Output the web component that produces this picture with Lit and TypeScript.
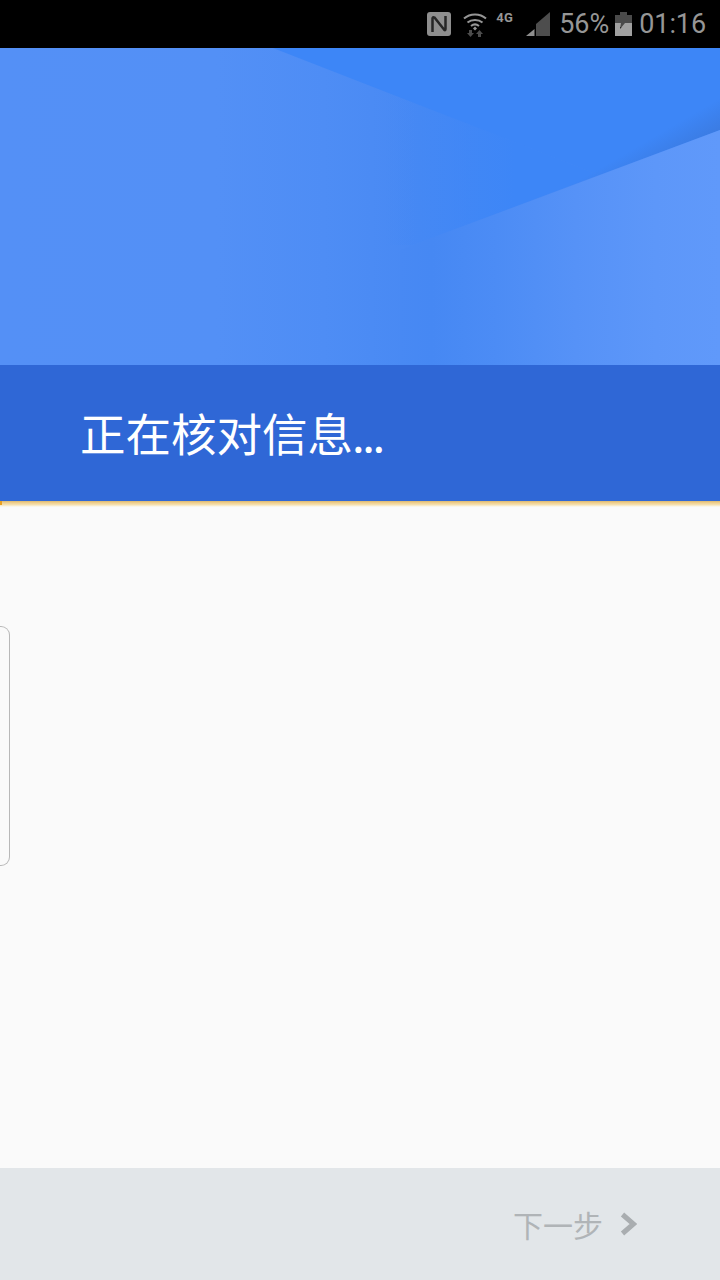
import { LitElement, html, css } from "lit";
import { customElement } from "lit/decorators.js";

@customElement("app-root")
export class AppRoot extends LitElement {
  static styles = css`
    :host {
      display: flex;
      flex-direction: column;
      width: 720px;
      height: 1280px;
      overflow: hidden;
      background: #fafafa;
      font-family: Roboto, "Noto Sans CJK SC", sans-serif;
    }
    .status {
      height: 48px;
      flex: none;
      background: #000;
      color: #969696;
      display: flex;
      align-items: center;
      justify-content: flex-end;
      padding-right: 14px;
      box-sizing: border-box;
    }
    .status svg { display: block; flex: none; }
    .nfc { margin-right: 12px; }
    .wifi { margin-right: 9px; }
    .net {
      font-size: 13px;
      font-weight: 700;
      width: 20px;
      margin-right: 10px;
      align-self: flex-start;
      margin-top: 11px;
      line-height: 14px;
      letter-spacing: 0.5px;
    }
    .signal { margin-right: 9px; }
    .pct { font-size: 27px; line-height: 48px; margin-right: 6px; }
    .batt { margin-right: 7px; }
    .time { font-size: 27px; line-height: 48px; letter-spacing: -0.1px; }
    .hero { height: 317px; flex: none; }
    .hero svg { display: block; }
    .band {
      height: 136px;
      flex: none;
      background: #2f67d6;
      display: flex;
      align-items: center;
      padding: 0 0 3px 80px;
      box-sizing: border-box;
      color: #fff;
      font-size: 45.5px;
      font-family: "Noto Sans CJK SC", sans-serif;
      line-height: 60px;
    }
    .dots { letter-spacing: -2.4px; margin-left: -1px; }
    .progress {
      height: 6px;
      flex: none;
      background:
        linear-gradient(#e8a020, #e8a020) no-repeat 0 0 / 2px 4px,
        linear-gradient(#dcb870 0%, #efcf8e 30%, #f5dfae 60%, #f9eed2 80%, #fafafa 100%);
    }
    .body { flex: 1; padding-top: 119px; box-sizing: border-box; }
    .handle {
      width: 10px;
      height: 240px;
      box-sizing: border-box;
      border: 1px solid #b8b8b8;
      border-left: none;
      border-radius: 0 9px 9px 0;
    }
    .footer {
      height: 112px;
      flex: none;
      background: #e2e6e9;
      display: flex;
      align-items: center;
      justify-content: flex-end;
      padding-right: 83px;
      box-sizing: border-box;
      color: #b0b4b7;
      font-size: 30px;
      line-height: 40px;
      font-family: "Noto Sans CJK SC", sans-serif;
    }
    .chev { display: block; margin-left: 17px; }
  `;

  render() {
    return html`
      <div class="status">
        <svg class="nfc" width="24" height="24" viewBox="0 0 24 24">
          <rect width="24" height="24" rx="3" fill="#8e8e8e" />
          <path d="M5.500 20V6.500Q5.500 4.500 7.500 5.500L17 17.500Q18.500 19 18.500 17V4" fill="none" stroke="#262626" stroke-width="2.500" />
        </svg>
        <svg class="wifi" width="24" height="26" viewBox="0 0 24 26">
          <g fill="none" stroke="#969696" stroke-width="2">
            <path d="M1 7.500C7 2 17 2 23 7.500" />
            <path d="M4.500 11.500C8.500 8 15.500 8 19.500 11.500" />
            <path d="M8 15c2.500-2 5.500-2 8 0" />
          </g>
          <path fill="#969696" d="M12 15.500l2 2-2 2-2-2z" />
          <path fill="#4c4c4c" d="M6 19h3v3h2l-3.500 4-3.500-4h2zM18 26h-3v-3h-2l3.500-4 3.500 4h-2z" />
        </svg>
        <span class="net">4G</span>
        <svg class="signal" width="24" height="24" viewBox="0 0 24 24">
          <path fill="#4d4d4d" d="M24 0v24H10V12z" />
          <path fill="#8e8e8e" d="M8.500 17v7H0z" />
        </svg>
        <span class="pct">56%</span>
        <svg class="batt" width="17" height="24" viewBox="0 0 17 24">
          <path fill="#4a4a4a" d="M5 0h7v3h5v12H0V3h5z" />
          <path fill="#a0a0a0" d="M0 11h6l-1 6 5-6h7v13H0z" />
        </svg>
        <span class="time">01:16</span>
      </div>
      <div class="hero">
        <svg width="720" height="317" viewBox="0 0 720 317">
          <defs>
            <linearGradient id="base" x1="0" x2="1" y1="0" y2="0">
              <stop offset="0" stop-color="#5490f6" />
              <stop offset="0.3" stop-color="#5390f6" />
              <stop offset="0.45" stop-color="#4e8df5" />
              <stop offset="0.58" stop-color="#4889f3" />
              <stop offset="1" stop-color="#4688f3" />
            </linearGradient>
            <linearGradient id="fade" gradientUnits="userSpaceOnUse" x1="385" y1="0" x2="515" y2="0">
              <stop offset="0" stop-color="#3d86f7" stop-opacity="0" />
              <stop offset="1" stop-color="#3d86f7" />
            </linearGradient>
            <linearGradient id="shade" gradientUnits="userSpaceOnUse" x1="720" y1="50" x2="734" y2="74">
              <stop offset="0" stop-color="#3a78dc" stop-opacity="0" />
              <stop offset="1" stop-color="#3a78dc" stop-opacity="0.75" />
            </linearGradient>
            <linearGradient id="light" gradientUnits="userSpaceOnUse" x1="400" y1="0" x2="720" y2="0">
              <stop offset="0" stop-color="#4889f3" />
              <stop offset="0.1" stop-color="#4688f3" />
              <stop offset="0.3" stop-color="#4c8cf5" />
              <stop offset="0.55" stop-color="#5692f7" />
              <stop offset="0.8" stop-color="#5d97f9" />
              <stop offset="1" stop-color="#6099fa" />
            </linearGradient>
          </defs>
          <rect width="720" height="317" fill="url(#base)" />
          <path d="M273 0H720V82L599 127Z" fill="#3d86f7" />
          <path d="M385 43L599 127L413 197H385Z" fill="url(#fade)" />
          <path d="M540 0H720V82L540 149Z" fill="url(#shade)" />
          <path d="M720 82V317H400V202L413 197Z" fill="url(#light)" />
        </svg>
      </div>
      <div class="band"><span>正在核对信息<span class="dots">...</span></span></div>
      <div class="progress"></div>
      <div class="body"><div class="handle"></div></div>
      <div class="footer">
        <span>下一步</span>
        <svg class="chev" width="17" height="24" viewBox="0 0 17 24">
          <path d="M2.500 2.500L13.500 12L2.500 21.500" fill="none" stroke="#a9adb0" stroke-width="5" />
        </svg>
      </div>
    `;
  }
}
